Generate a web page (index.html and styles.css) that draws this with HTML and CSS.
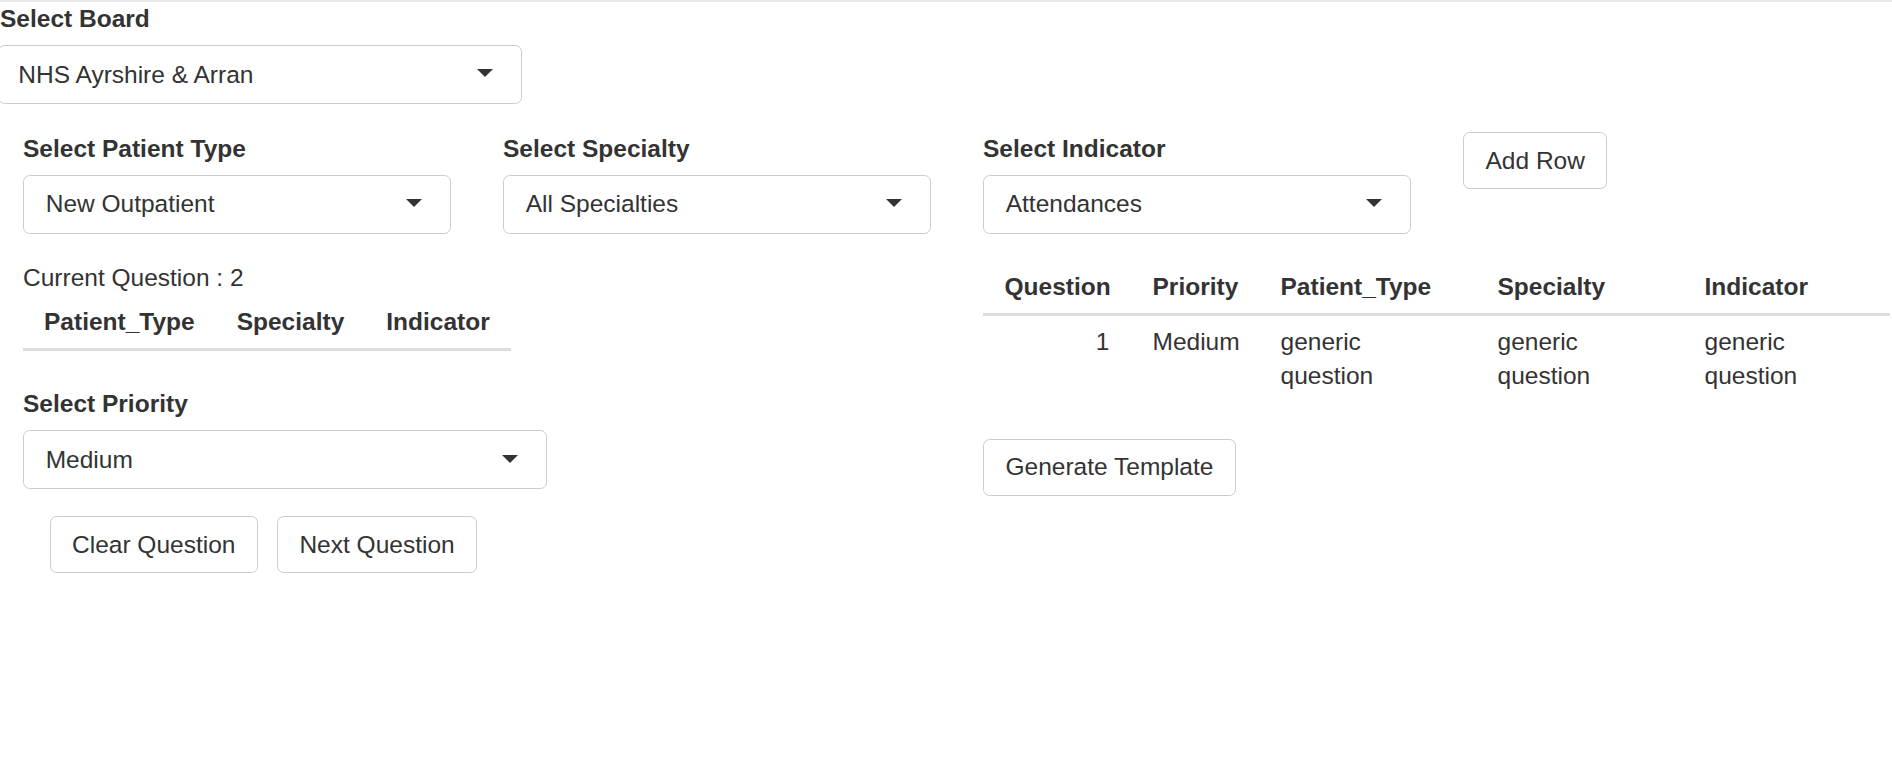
FILE: index.html
```html
<!DOCTYPE html>
<html lang="en">
<head>
<meta charset="utf-8">
<title>Question Builder</title>
<link rel="stylesheet" href="styles.css">
</head>
<body>
<div class="page">
  <div class="board">
    <label class="lbl">Select Board</label>
    <div class="select board-select"><span class="sel-text">NHS Ayrshire &amp; Arran</span><span class="caret"></span></div>
  </div>

  <div class="filters">
    <div class="field">
      <label class="lbl">Select Patient Type</label>
      <div class="select"><span class="sel-text">New Outpatient</span><span class="caret"></span></div>
    </div>
    <div class="field">
      <label class="lbl">Select Specialty</label>
      <div class="select"><span class="sel-text">All Specialties</span><span class="caret"></span></div>
    </div>
    <div class="field">
      <label class="lbl">Select Indicator</label>
      <div class="select"><span class="sel-text">Attendances</span><span class="caret"></span></div>
    </div>
    <div class="field">
      <button class="btn">Add Row</button>
    </div>
  </div>

  <div class="main">
    <div class="left">
      <div class="current">Current Question : 2</div>
      <table class="mini">
        <thead>
          <tr><th>Patient_Type</th><th>Specialty</th><th>Indicator</th></tr>
        </thead>
      </table>
      <label class="lbl">Select Priority</label>
      <div class="select priority-select"><span class="sel-text">Medium</span><span class="caret"></span></div>
      <div class="actions">
        <button class="btn">Clear Question</button>
        <button class="btn">Next Question</button>
      </div>
    </div>
    <div class="right">
      <table class="results">
        <colgroup>
          <col class="c-q"><col class="c-p"><col class="c-pt"><col class="c-s"><col class="c-i">
        </colgroup>
        <thead>
          <tr><th class="num">Question</th><th>Priority</th><th>Patient_Type</th><th>Specialty</th><th>Indicator</th></tr>
        </thead>
        <tbody>
          <tr><td class="num">1</td><td>Medium</td><td>generic question</td><td>generic question</td><td>generic question</td></tr>
        </tbody>
      </table>
      <button class="btn generate">Generate Template</button>
    </div>
  </div>
</div>
</body>
</html>
```

FILE: styles.css
```css
* { box-sizing: border-box; }

html, body {
  margin: 0;
  padding: 0;
  background: #ffffff;
}

body {
  font-family: "Liberation Sans", Arial, Helvetica, sans-serif;
  font-size: 24.5px;
  line-height: 33.33px;
  color: #333333;
  overflow: hidden;
}

.page {
  border-top: 2px solid #e9e9e9;
  width: 1892px;
}

.lbl {
  display: block;
  font-weight: 700;
  line-height: 33.33px;
  margin-bottom: 9.5px;
}

.select {
  display: flex;
  align-items: center;
  height: 59px;
  border: 1px solid #cccccc;
  border-radius: 6.67px;
  background: #ffffff;
  padding: 0 28px 0 21.7px;
}

.sel-text {
  flex: 1;
  white-space: nowrap;
}

.caret {
  width: 0;
  height: 0;
  border-left: 8.3px solid transparent;
  border-right: 8.3px solid transparent;
  border-top: 8.3px solid #333333;
  margin-top: -2px;
}

.board-select {
  width: 524px;
  margin-left: -2px;
  padding-left: 19.3px;
}

.filters {
  display: grid;
  grid-template-columns: 428px 428px 428px auto;
  column-gap: 52px;
  margin-top: 28px;
  padding-left: 23px;
  align-items: start;
}

.btn {
  display: inline-flex;
  align-items: center;
  justify-content: center;
  height: 57px;
  padding: 0 21.5px;
  border: 1px solid #cccccc;
  border-radius: 6.67px;
  background: #ffffff;
  color: #333333;
  font-family: inherit;
  font-size: 24.5px;
  line-height: 33.33px;
  white-space: nowrap;
}

.main {
  display: grid;
  grid-template-columns: 908px 909px;
  column-gap: 52px;
  margin-top: 27.5px;
  padding-left: 23px;
  align-items: start;
}

.current {
  line-height: 33.33px;
}

table {
  border-collapse: collapse;
  border-spacing: 0;
}

th {
  font-weight: 700;
  text-align: left;
}

.mini {
  margin-top: 1.4px;
  margin-bottom: 36.7px;
}

.mini th {
  padding: 9.3px 21px;
  border-bottom: 3px solid #dddddd;
}

.priority-select {
  width: 524px;
}

.actions {
  display: flex;
  gap: 19px;
  margin-top: 26.7px;
  padding-left: 26.5px;
}

.results {
  width: 907px;
  table-layout: fixed;
}

.c-q { width: 148px; }
.c-p { width: 128px; }
.c-pt { width: 217px; }
.c-s { width: 207px; }
.c-i { width: 207px; }

.results th,
.results td {
  padding: 9.3px 21.5px;
  vertical-align: top;
}

.results th {
  border-bottom: 3px solid #dddddd;
}

.results .num {
  text-align: right;
}

.generate {
  margin-top: 37.3px;
}
```
